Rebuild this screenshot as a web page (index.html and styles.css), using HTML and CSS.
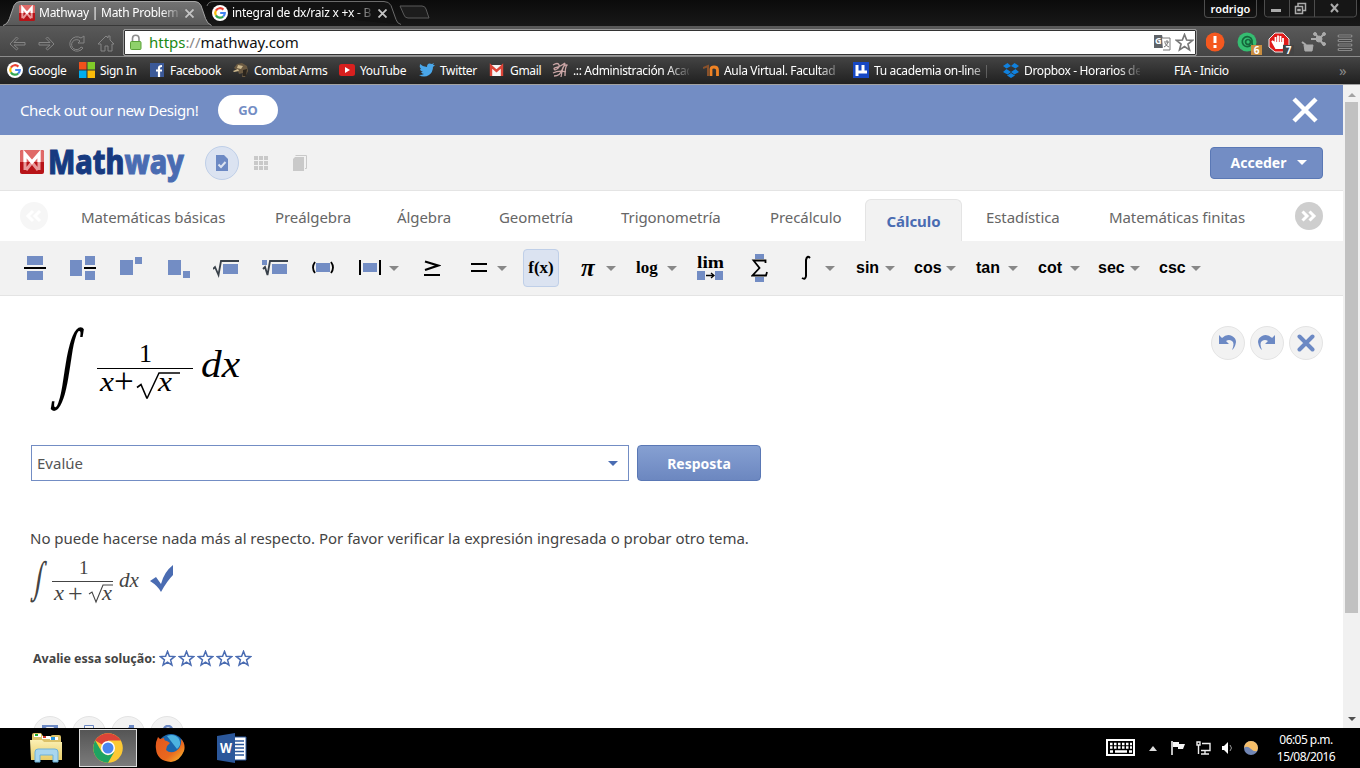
FILE: index.html
```html
<!DOCTYPE html>
<html lang="es">
<head>
  <meta charset="UTF-8">
  <title>Mathway | Math Problem Solver</title>
  <link rel="stylesheet" href="styles.css">
</head>
<body>
  <svg class="defs" width="0" height="0">
    <defs>
      <linearGradient id="tabOn" x1="0" y1="0" x2="0" y2="1"><stop offset="0" stop-color="#737373"/><stop offset="1" stop-color="#585858"/></linearGradient>
      <linearGradient id="folder" x1="0" y1="0" x2="0" y2="1"><stop offset="0" stop-color="#fbf0b4"/><stop offset="1" stop-color="#e8cd68"/></linearGradient>
      <linearGradient id="fire" x1="0" y1="0" x2="1" y2="1"><stop offset="0" stop-color="#e2561d"/><stop offset=".6" stop-color="#e9681e"/><stop offset="1" stop-color="#fbc530"/></linearGradient>
      <symbol id="google" viewBox="0 0 16 16">
        <circle cx="8" cy="8" r="8" fill="#fff"/>
        <path d="M11.4 4.6A4.8 4.8 0 0 0 3.9 5.6" fill="none" stroke="#ea4335" stroke-width="2.2"/>
        <path d="M3.9 5.6a4.8 4.8 0 0 0 0 4.8" fill="none" stroke="#fbbc05" stroke-width="2.2"/>
        <path d="M3.9 10.4a4.8 4.8 0 0 0 7.3 1.1" fill="none" stroke="#34a853" stroke-width="2.2"/>
        <path d="M11.2 11.5A4.8 4.8 0 0 0 12.8 8H8.2" fill="none" stroke="#4285f4" stroke-width="2.2"/>
      </symbol>
      <symbol id="mlogo" viewBox="0 0 24 24">
        <rect width="24" height="24" rx="2" fill="#b81418"/>
        <path d="M2 0h20a2 2 0 0 1 2 2v10H0V2a2 2 0 0 1 2-2z" fill="#e06a68"/>
        <path d="M5 20V4l7 8.500L19 4v16M6 20l6-7.500 6 7.500" fill="none" stroke="#e89a9a" stroke-width="3"/>
        <path d="M5 12V4l7 8 7-8v8" fill="none" stroke="#fff" stroke-width="3.200"/>
      </symbol>
      <symbol id="star" viewBox="0 0 16 16">
        <path d="M8 1.300l1.800 4.600 4.900.300-3.800 3.100 1.300 4.900L8 11.400l-4.200 2.800 1.300-4.900L1.300 6.200l4.900-.300z" fill="none" stroke="currentColor" stroke-width="1.400"/>
      </symbol>
    </defs>
  </svg>

  <header class="browser">
    <div class="tabstrip">
      <div class="tab tab-on">
        <svg class="tab-shape" width="212" height="26"><path d="M3 25.500c3-1 5-3 6.500-7L14 5.500Q16 1.500 20 1.500h175q4 0 6 4l4.500 13q1.500 5 6 7" fill="url(#tabOn)" stroke="#a5a5a5"/></svg>
        <svg width="16" height="16"><use href="#mlogo"/></svg>
        <span class="tab-title">Mathway | Math Problem S</span>
        <svg class="tab-close" width="9" height="9"><path d="M.5.5l8 8m0-8l-8 8" stroke="#c4c4c4" stroke-width="1.800"/></svg>
      </div>
      <div class="tab">
        <svg class="tab-shape" width="196" height="25"><path d="M1 6Q2 1.500 8 1.500h170q5 0 7 4l5 14q1 4 5 5" fill="#121212" stroke="#6b6b6b"/></svg>
        <svg width="16" height="16"><use href="#google"/></svg>
        <span class="tab-title">integral de dx/raiz x +x - B</span>
        <svg class="tab-close" width="9" height="9"><path d="M.5.5l8 8m0-8l-8 8" stroke="#c4c4c4" stroke-width="1.800"/></svg>
      </div>
      <svg class="new-tab" width="32" height="16"><path d="M1 1h22q3 0 4 3l3 9H9q-3 0-4-3z" fill="#1d1d1d" stroke="#5a5a5a"/></svg>
      <div class="user">rodrigo</div>
      <svg class="win" width="93" height="18">
        <path d="M.5 0v14q0 3 3 3h86q3 0 3-3V0M25.500 0v17M50.500 0v17" fill="#161616" stroke="#4d4d4d"/>
        <path d="M7 10.500h10" stroke="#aaa" stroke-width="3"/>
        <path d="M31.500 6.500h7v7h-7zM34 6V3.500h7.500v7H39M34 9.500h2v1h-2z" fill="none" stroke="#aaa" stroke-width="1.500"/>
        <path d="M67 4l7 8m0-8l-7 8" stroke="#aaa" stroke-width="2"/>
      </svg>
    </div>

    <div class="toolbar">
      <svg class="nav-icons" width="112" height="20" fill="none" stroke="#858585" stroke-width="1">
        <path d="M22 9.500H11l4-4-1.500-1.500L7 11l6.500 6 1.500-1.500-4-3.500h11zM36 9.500h11l-4-4L44.500 4 51 11l-6.500 6-1.500-1.500 4-3.500H36z"/>
        <path d="M81 6V3l-3 2a7.200 7.200 0 1 0 2 10l-2-1a5 5 0 1 1-1-6l-2 2h6z"/>
        <path d="M95 11l8-8 2 2V3h2v4l4 4h-2v7h-4v-5h-3v5h-4v-7z"/>
      </svg>
      <div class="omnibox">
        <svg width="14" height="18"><path d="M3.500 8V4.500a3.200 3.200 0 0 1 6.500 0V8" fill="none" stroke="#8d8d8d" stroke-width="1.600"/><rect x="1.500" y="7.500" width="10.500" height="8" rx="1" fill="#8fd16b" stroke="#5ba139"/></svg>
        <span class="url"><b>https</b><i>://</i>mathway.com</span>
        <svg class="translate" width="17" height="16"><path d="M0 0h8l3 13H0z" fill="#5f6368"/><path d="M8 3h8v12H9" fill="#fff" stroke="#777"/><path d="M10 7h5M13 5v2M14 7q-1 4-4 5M11 8q1 3 4 4" stroke="#777" fill="none"/><text x="1" y="9" fill="#fff" class="tr-g">G</text></svg>
        <svg class="fav" width="19" height="19"><use href="#star"/></svg>
      </div>
      <svg class="ext" width="150" height="26">
        <circle cx="9" cy="11" r="9.500" fill="#f4581f"/><path d="M9 5v7M9 14v3" stroke="#fff" stroke-width="3"/>
        <circle cx="41" cy="11" r="9.500" fill="#35bd71"/><path d="M46 9v3q0 3 2 3M46 9a5 5 0 1 0-1 5M42 8.500a2.500 2.500 0 1 0 .1 0" fill="none" stroke="#15663c" stroke-width="1.700"/>
        <rect x="45" y="14" width="11" height="10" fill="#c98d3f"/><text x="50.500" y="23" class="badge">6</text>
        <path d="M69 2h8l6 6v8l-6 5h-8l-6-5V8z" fill="#e01a1a" stroke="#eee"/><path d="M69.500 13V6M72 12V4.500M74.500 12V5M77 13V7M69 12l-3-2 4 7h6l1-5z" fill="#fff" stroke="#fff" stroke-width="1.800"/>
        <rect x="77" y="14" width="11" height="10" fill="#444"/><text x="82.500" y="23" class="badge">7</text>
        <g stroke="#aaa" fill="#aaa"><path d="M98 14h9l-1 6h-7z" /><path d="M96 11l4 3M109 2l4 6 5-5M113 8l5 6M105 8l8 0" fill="none" stroke-width="2"/><circle cx="113" cy="8" r="3"/><circle cx="109" cy="3" r="1.500"/><circle cx="118" cy="3" r="1.500"/><circle cx="118" cy="13" r="1.500"/></g>
        <path d="M133 5h12M133 9.500h12M133 14h12M133 18.500h12" stroke="#888" stroke-width="3" stroke-linecap="round"/><path d="M133 5h12M133 9.500h12M133 14h12M133 18.500h12" stroke="#444" stroke-width="1.200"/>
      </svg>
    </div>

    <nav class="bookmarks">
      <a><svg width="16" height="16"><use href="#google"/></svg>Google</a>
      <a><svg width="16" height="16"><path d="M0 0h7.500v7.500H0z" fill="#f1511b"/><path d="M8.500 0H16v7.500H8.500z" fill="#80cc28"/><path d="M0 8.500h7.500V16H0z" fill="#00adef"/><path d="M8.500 8.500H16V16H8.500z" fill="#fbbc09"/></svg>Sign In</a>
      <a><svg width="16" height="16"><rect x="1" y="1" width="14" height="14" fill="#3b5998"/><path d="M10 15V6q0-2 3-2M7 8.500h6" fill="none" stroke="#fff" stroke-width="2.200"/></svg>Facebook</a>
      <a><svg width="16" height="16"><path d="M1 6l3-4 5-1 5 3 1 5-3 6H9l1-4-4 1-1-3z" fill="#6b5a42"/><path d="M5 3l5 1-2 3-4-1zM0 9l5-2 1 2-5 1z" fill="#cdb88d"/><path d="M10 8l4-1-1 7h-3z" fill="#2c251c"/></svg>Combat Arms</a>
      <a><svg width="16" height="16"><rect y="2" width="16" height="12" rx="2.500" fill="#d8201f"/><path d="M6 5l5 3-5 3z" fill="#fff"/></svg>YouTube</a>
      <a><svg width="16" height="16"><path d="M0 13q5 3 10 0 4-3 4-8l2-2h-2l1-2-2 1Q8 0 8 5 4 5 1 2q-1 3 1 5H1q0 2 3 3H2q1 2 3 2-2 1-5 1z" fill="#4aa7ea"/></svg>Twitter</a>
      <a><svg width="16" height="16"><path d="M1 3h13v11H1z" fill="#f5f5f5"/><path d="M2 14V4l5.500 5L13 4v10" fill="none" stroke="#dc4437" stroke-width="2.400"/></svg>Gmail</a>
      <a class="fade"><svg width="16" height="16" fill="none" stroke="#cba6a6" stroke-width="1.300"><path d="M1 3q5-3 6 0t-4 5q-3-2 3-3 3-1 7-4-3 6-4 14M2 14q6 0 8-6t5-5q-2 2-2 11M1 11q6-3 13-1"/></svg>.:: Administración Acad</a>
      <a class="fade"><svg width="16" height="16"><path d="M0 6l5-2v10" fill="none" stroke="#89512b" stroke-width="2"/><path d="M8 14V7q0-2 3-2 3.500 0 3.500 3v6" fill="none" stroke="#f08324" stroke-width="2.800"/></svg>Aula Virtual. Facultad</a>
      <a class="fade"><svg width="16" height="16"><rect width="16" height="16" fill="#1748c4"/><path d="M4 14V3M4 10h6V3v7h4" fill="none" stroke="#fff" stroke-width="3"/></svg>Tu academia on-line |</a>
      <a class="fade"><svg width="16" height="16" fill="#1081de"><path d="M4.500 1L8 4 3.500 6.500 0 4zM11.500 1L8 4l4.500 2.500L16 4zM3.500 7L8 10l-3.500 2.500L0 10zM12.500 7L8 10l3.500 2.500L16 10zM8 11l4 2.500L8 16l-4-2.500z"/></svg>Dropbox - Horarios de</a>
      <a>FIA - Inicio</a>
      <span class="more">»</span>
    </nav>
  </header>

  <div class="viewport">
    <main class="page">
      <div class="banner">
        <span class="banner-text">Check out our new Design!</span>
        <button class="go">GO</button>
        <svg class="banner-close" width="26" height="26"><path d="M2 2l22 22M24 2L2 24" stroke="#fff" stroke-width="4.500"/></svg>
      </div>

      <div class="head">
        <svg class="logo" width="166" height="38">
          <use href="#mlogo" width="24" height="24" y="4"/>
          <text x="28" y="28" textLength="136" lengthAdjust="spacingAndGlyphs" fill="#173a80" stroke="#173a80">Math<tspan fill="#4a6cb2" stroke="#4a6cb2">way</tspan></text>
        </svg>
        <div class="mode mode-on"><svg width="12" height="16"><path d="M0 0h8l4 4v12H0z" fill="#6c89c4"/><path d="M2.500 9.500L5 12l4.500-5" fill="none" stroke="#dbe3f1" stroke-width="2"/></svg></div>
        <div class="mode"><svg width="14" height="14" fill="#c9c9c9"><path d="M0 0h4v4H0zM5 0h4v4H5zM10 0h4v4h-4zM0 5h4v4H0zM5 5h4v4H5zM10 5h4v4h-4zM0 10h4v4H0zM5 10h4v4H5zM10 10h4v4h-4z"/></svg></div>
        <div class="mode"><svg width="14" height="16"><path d="M2.500.5h11v13H12" fill="none" stroke="#c9c9c9"/><path d="M2 2h9v14H0V4z" fill="#c9c9c9"/></svg></div>
        <button class="login">Acceder <i class="caret"></i></button>
      </div>

      <nav class="subjects">
        <svg class="arrow" width="28" height="28"><circle cx="14" cy="14" r="14" fill="#f6f6f6"/><path d="M13 9l-5 5 5 5M20 9l-5 5 5 5" fill="none" stroke="#fff" stroke-width="3"/></svg>
        <a>Matemáticas básicas</a>
        <a>Preálgebra</a>
        <a>Álgebra</a>
        <a>Geometría</a>
        <a>Trigonometría</a>
        <a>Precálculo</a>
        <a class="current">Cálculo</a>
        <a>Estadística</a>
        <a>Matemáticas finitas</a>
        <svg class="arrow" width="28" height="28"><circle cx="14" cy="14" r="14" fill="#cecece"/><path d="M7.500 9.500l4.500 4.500-4.500 4.500M14.500 9.500l4.500 4.500-4.500 4.500" fill="none" stroke="#fff" stroke-width="3"/></svg>
      </nav>

      <div class="tools">
        <div class="tool"><svg width="22" height="24"><path d="M3 0h16v9H3zM3 15h16v9H3z" fill="#738dc4"/><path d="M0 12h22" stroke="#000" stroke-width="2"/></svg></div>
        <div class="tool"><svg width="26" height="24"><path d="M0 4h12v16H0zM15 0h10v9H15zM15 15h10v9H15z" fill="#738dc4"/><path d="M14 12h12" stroke="#000" stroke-width="2"/></svg></div>
        <div class="tool"><svg width="22" height="24" fill="#738dc4"><path d="M0 4h13v15H0zM15 1h7v7h-7z"/></svg></div>
        <div class="tool"><svg width="22" height="24" fill="#738dc4"><path d="M0 4h13v15H0zM15 15h7v7h-7z"/></svg></div>
        <div class="tool"><svg width="26" height="24"><path d="M10 8h15v10H10z" fill="#738dc4"/><path d="M0 13l2-2 3.500 8L8 5h18" fill="none" stroke="#39414a" stroke-width="1.800"/></svg></div>
        <div class="tool"><svg width="26" height="24"><path d="M10 8h15v10H10zM0 4h5v5H0z" fill="#738dc4"/><path d="M1 13l2-2 2.500 8L8 5h18" fill="none" stroke="#39414a" stroke-width="1.800"/></svg></div>
        <div class="tool"><svg width="22" height="24"><path d="M4 7h14v9H4z" fill="#738dc4"/><path d="M3 6q-4 5.500 0 11M19 6q4 5.500 0 11" fill="none" stroke="#000" stroke-width="1.800"/></svg></div>
        <div class="tool"><svg width="30" height="24"><path d="M4 7h14v9H4z" fill="#738dc4"/><path d="M1 4v15M21 4v15" stroke="#000" stroke-width="2"/></svg><i class="caret"></i></div>
        <div class="tool"><svg width="17" height="24"><path d="M1 5.500l13 4L1 14M0 19h16" fill="none" stroke="#000" stroke-width="2.200"/></svg></div>
        <div class="tool"><svg width="26" height="24"><path d="M0 8h16M0 15h16" stroke="#000" stroke-width="2"/></svg><i class="caret"></i></div>
        <div class="tool tool-on"><span class="serif fx">f(x)</span></div>
        <div class="tool"><span class="serif pi">π</span><i class="caret"></i></div>
        <div class="tool"><span class="serif log">log</span><i class="caret"></i></div>
        <div class="tool"><svg width="28" height="28" class="serif"><text x="0" y="14" textLength="27" lengthAdjust="spacingAndGlyphs">lim</text><path d="M0 17h8v9H0zM18 17h8v9h-8z" fill="#738dc4"/><path d="M9 21.500h8M14 19l3 2.500-3 2.500" fill="none" stroke="#000" stroke-width="1.300"/></svg></div>
        <div class="tool"><svg width="17" height="28"><path d="M4 0h9v5H4zM4 23h9v5H4z" fill="#738dc4"/><path d="M14.500 9V6.500H2.500l6 7.500-7 7.500H15l1-3.500" fill="none" stroke="#000" stroke-width="1.800"/></svg></div>
        <div class="tool"><svg width="25" height="26"><path d="M10 3q-3-3-4 2v16q-.5 4-4 2" fill="none" stroke="#000" stroke-width="2"/></svg><i class="caret"></i></div>
        <div class="tool"><span class="trig sin">sin</span><i class="caret"></i></div>
        <div class="tool"><span class="trig">cos</span><i class="caret"></i></div>
        <div class="tool"><span class="trig">tan</span><i class="caret"></i></div>
        <div class="tool"><span class="trig">cot</span><i class="caret"></i></div>
        <div class="tool"><span class="trig">sec</span><i class="caret"></i></div>
        <div class="tool"><span class="trig">csc</span><i class="caret"></i></div>
      </div>

      <section class="editor">
        <svg class="math" width="200" height="92">
          <text class="int" transform="translate(0 68) skewX(-9) scale(.62 1)" font-size="76">∫</text>
          <text x="89" y="40" font-size="26">1</text>
          <path d="M47 46.500h96" stroke="#000"/>
          <path d="M87 65.500l4-3 6 14" fill="none" stroke="#000" stroke-width="1.600"/>
          <path d="M97 76.500l12-25.500h21" fill="none" stroke="#000" stroke-width="1.500"/>
          <text x="50" y="69" font-size="28" class="it" textLength="14" lengthAdjust="spacingAndGlyphs">x</text>
          <text x="64" y="71" font-size="35">+</text>
          <text x="108" y="69" font-size="28" class="it" textLength="14" lengthAdjust="spacingAndGlyphs">x</text>
          <text x="151" y="55" font-size="38" class="it" textLength="39" lengthAdjust="spacingAndGlyphs">dx</text>
        </svg>
        <div class="history">
          <div class="round"><svg width="18" height="18"><path d="M0 1l3 3Q8-1 13 2q4 2 4 6-1 6-4 8 3-7 0-9-3-2-6 0l3 3H0z" fill="#6c89c4"/></svg></div>
          <div class="round"><svg width="18" height="18"><path d="M17 1l-3 3Q9-1 4 2 0 4 0 8q1 6 4 8Q1 9 4 7q3-2 6 0l-3 3h10z" fill="#6c89c4"/></svg></div>
          <div class="round"><svg width="18" height="18"><path d="M2.500 2.500l13 13m0-13l-13 13" stroke="#6c89c4" stroke-width="4" stroke-linecap="round"/></svg></div>
        </div>
      </section>

      <form class="answer">
        <div class="select">Evalúe <i class="caret"></i></div>
        <button type="button" class="submit">Resposta</button>
      </form>

      <section class="result">
        <p>No puede hacerse nada más al respecto. Por favor verificar la expresión ingresada o probar otro tema.</p>
        <svg class="math small" width="150" height="50">
          <text class="int" transform="translate(0 36) skewX(-9) scale(.62 1)" font-size="38">∫</text>
          <text x="49" y="18" font-size="19">1</text>
          <path d="M22 25.500h61" stroke="#444"/>
          <path d="M59 38l3-2 4 10 7-17h10" fill="none" stroke="#444" stroke-width="1.100"/>
          <text x="24" y="44" font-size="20" class="it" textLength="10" lengthAdjust="spacingAndGlyphs">x</text>
          <text x="38" y="46" font-size="26">+</text>
          <text x="72" y="44" font-size="20" class="it" textLength="10" lengthAdjust="spacingAndGlyphs">x</text>
          <text x="89" y="31" font-size="20" class="it" textLength="20" lengthAdjust="spacingAndGlyphs">dx</text>
          <path d="M120 25l6-4 5 7q3-12 12-19v10q-6 6-12 17-3-6-11-11z" fill="#4a6cb2"/>
        </svg>
      </section>

      <div class="rate">
        <strong>Avalie essa solução:</strong>
        <svg width="17" height="17"><use href="#star"/></svg>
        <svg width="17" height="17"><use href="#star"/></svg>
        <svg width="17" height="17"><use href="#star"/></svg>
        <svg width="17" height="17"><use href="#star"/></svg>
        <svg width="17" height="17"><use href="#star"/></svg>
      </div>

      <div class="share">
        <div class="round"><svg width="16" height="16" fill="none" stroke="#6c89c4" stroke-width="2"><path d="M1 1h14v10H1zM2 2l6 5 6-5"/></svg></div>
        <div class="round"><svg width="16" height="16" fill="none" stroke="#6c89c4"><path d="M3.500 6V.5h9V6M1 6h14v7H1z"/></svg></div>
        <div class="round"><svg width="16" height="16"><path d="M9 0h5v16H9zM2 8l7-6v6z" fill="#6c89c4"/></svg></div>
        <div class="round"><svg width="16" height="16"><circle cx="9" cy="5" r="4" fill="none" stroke="#6c89c4" stroke-width="2.500"/></svg></div>
      </div>
    </main>

    <aside class="scrollbar">
      <i class="up"></i>
      <div class="thumb"></div>
      <i class="down"></i>
    </aside>
  </div>

  <footer class="taskbar">
    <svg class="app" width="34" height="32">
      <path d="M2 3q0-2 2-2h7l2 3h8q0-1 2-1h6q2 0 2 2v22H2z" fill="#dcc269"/>
      <path d="M4 2h7v3H4zM12 4h8v3h-8zM20 5h8v3h-8z" fill="#fff"/><path d="M5 2h3v2H5z" fill="#1cae32"/><path d="M13 4h3v2h-3z" fill="#d0372c"/><path d="M21 5h4v3h-4z" fill="#2896df"/>
      <path d="M0 8h12l2 2h18v18H1z" fill="url(#folder)"/>
      <path d="M5 20q0-3 3-3h17q3 0 3 3v10h-5v-7H10v7H5z" fill="#a8d6ee" stroke="#6eb1d8"/>
    </svg>
    <div class="task-on">
      <svg width="30" height="30" viewBox="-15 -15 30 30"><circle r="14.800" fill="#fcc934"/><path d="M0 0L-12.800-7.400A14.800 14.800 0 0 1 12.800-7.400H0z" fill="#dc4437"/><path d="M-12.800-7.400L-6.500 3.500 0 7.500 6.500 3.500 0 14.800A14.800 14.800 0 0 1-12.800-7.400z" fill="#1ea362"/><circle r="7" fill="#fff"/><circle r="5.500" fill="#4a86ee"/></svg>
    </div>
    <svg class="firefox" width="30" height="30"><circle cx="16" cy="14" r="13" fill="#1b66ad"/><path d="M12 3q8-3 12 3 3 6-2 10" fill="#4db3e0"/><path d="M3 4l2 2 4-1q0 3 3 3l3 2-3 3-1 4q4 4 10 1 6-4 5-12 5 5 3 12-4 10-13 11Q2 28 1 16 0 10 3 4z" fill="url(#fire)"/></svg>
    <svg class="word" width="30" height="30"><path d="M16 4h13v23H16z" fill="#fff" stroke="#2b579a"/><path d="M18 8h9M18 11.500h9M18 15h9M18 18.500h9M18 22h9" stroke="#2b579a" stroke-width="1.300"/><path d="M0 3l18-3v30L0 27z" fill="#2b579a"/><text x="9" y="20" class="w" textLength="12" lengthAdjust="spacingAndGlyphs">W</text></svg>
    <div class="tray">
      <svg width="30" height="18"><path d="M1 1h27v15H1z" fill="none" stroke="#fff" stroke-width="2"/><path d="M4 5h22M4 8.500h22" stroke="#fff" stroke-width="2.500" stroke-dasharray="2.500 1.500"/><path d="M4 12.500h3M9 12.500h12M23 12.500h3" stroke="#fff" stroke-width="2.500"/></svg>
      <svg class="t-up" width="8" height="5"><path d="M4 0l4 5H0z" fill="#ddd"/></svg>
      <svg class="t-flag" width="16" height="14"><path d="M1 0v14" stroke="#fff" stroke-width="1.500"/><path d="M2 1h6v2h6l-2 5H7V6H2z" fill="#f5f5f5"/></svg>
      <svg class="t-net" width="16" height="14" fill="none" stroke="#eee" stroke-width="1.400"><path d="M6 2.500h8v7H5M9 10v3M5 13h8M1 1h3v3H1zM2.500 4v9"/></svg>
      <svg class="t-vol" width="13" height="14"><path d="M0 5h2l4-4v12L2 9H0z" fill="#fff"/><path d="M8 4q3 3 0 6" fill="none" stroke="#999"/></svg>
      <svg class="t-f" width="14" height="14"><circle cx="7" cy="7" r="7" fill="#7186b4"/><path d="M0 7a7 7 0 0 1 14 0l-1 3q-3 1-6-2-4-4-7-1z" fill="#f6be69"/></svg>
      <div class="clock">06:05 p.m.<br>15/08/2016</div>
    </div>
  </footer>
</body>
</html>
```
FILE: styles.css
```css
* {
  box-sizing: border-box;
}
body {
  margin: 0;
  width: 1360px;
  height: 768px;
  overflow: hidden;
  background: #fff;
  font-family: "Noto Sans", "Open Sans", sans-serif;
  display: flex;
  flex-direction: column;
}
svg {
  display: block;
  flex: none;
}
.defs {
  position: absolute;
}
button {
  font-family: inherit;
  border: none;
  padding: 0;
}
.caret {
  border: 5px solid transparent;
  border-top-color: #888;
  border-bottom: 0;
  flex: none;
}

/* browser window */
.browser {
  height: 85px;
  background: linear-gradient(#5a5a5a 25px, #454545 56px, #202020 84px);
  border-bottom: 1px solid #a2a2a2;
  color: #fff;
  font-size: 12px;
}
.tabstrip {
  height: 26px;
  display: flex;
  background: linear-gradient(#0b0b0b, #181818);
}
.tab {
  position: relative;
  display: flex;
  align-items: center;
  width: 190px;
  height: 26px;
  padding-left: 6px;
}
.tab > * {
  position: relative;
}
.tab > .tab-shape {
  position: absolute;
  left: 0;
  top: 0;
}
.tab-on {
  width: 206px;
  padding-left: 19px;
  z-index: 1;
}
.tab-title {
  width: 144px;
  margin: -1px 0 0 4px;
  white-space: nowrap;
  letter-spacing: -0.25px;
  -webkit-mask-image: linear-gradient(to right, #000 122px, transparent 144px);
}
.tab-close {
  margin-left: 2px;
}
.new-tab {
  margin: 5px 0 0 3px;
}
.user {
  width: 53px;
  height: 18px;
  margin-left: auto;
  border: 1px solid #4d4d4d;
  border-top: 0;
  border-radius: 0 0 4px 4px;
  text-align: center;
  font-size: 11px;
  font-weight: 600;
  line-height: 17px;
}
.win {
  margin: 0 3px 0 7px;
}
.toolbar {
  height: 31px;
  display: flex;
  align-items: center;
  border-bottom: 1px solid #8b8b8b;
}
.nav-icons {
  margin: 3px 0 0 3px;
}
.omnibox {
  width: 1074px;
  height: 27px;
  margin: 3px 0 0 8px;
  padding-left: 5px;
  display: flex;
  align-items: center;
  background: #fff;
  border: 1px solid #999;
  box-shadow: inset 0 0 0 1px #333;
  border-radius: 2px;
  color: #111;
}
.url {
  flex: 1;
  margin: -2px 0 0 6px;
  font-size: 15px;
  letter-spacing: -0.03px;
}
.url b {
  font-weight: 400;
  color: #1b8a14;
}
.url i {
  font-style: normal;
  color: #888;
}
.tr-g {
  font-size: 9px;
  font-weight: 700;
}
.fav {
  margin: 0 2px 0 4px;
  color: #777;
}
.ext {
  margin: 5px 0 0 9px;
}
.badge {
  fill: #fff;
  font-size: 10px;
  font-weight: 700;
  text-anchor: middle;
}
.bookmarks {
  height: 26px;
  padding-left: 7px;
  display: grid;
  grid-template-columns: 72px 70px 84px 106px 80px 70px 63px 151px 150px 150px 171px 165px 20px;
  align-items: center;
  letter-spacing: -0.35px;
}
.bookmarks a {
  display: flex;
  align-items: center;
  gap: 5px;
  white-space: nowrap;
}
.bookmarks .fade {
  width: 137px;
  -webkit-mask-image: linear-gradient(to right, #000 115px, transparent 140px);
}
.more {
  color: #888;
  font-size: 15px;
  line-height: 20px;
}

/* page */
.viewport {
  height: 643px;
  display: flex;
}
.page {
  width: 1343px;
  height: 643px;
  overflow: hidden;
}
.banner {
  height: 50px;
  padding: 0 25px 0 20px;
  display: flex;
  align-items: center;
  background: #738dc4;
  color: #fff;
}
.banner-text {
  width: 198px;
  font-size: 15px;
  letter-spacing: -0.41px;
  white-space: nowrap;
}
.go {
  width: 60px;
  height: 30px;
  border-radius: 15px;
  background: #fff;
  color: #738dc4;
  font-size: 13px;
  font-weight: 700;
}
.banner-close {
  margin-left: auto;
}
.head {
  height: 56px;
  padding: 0 20px;
  display: flex;
  align-items: center;
  background: #f2f2f2;
  border-bottom: 1px solid #e4e4e4;
}
.logo {
  margin: 5px 19px 0 0;
  font-size: 33px;
  font-weight: 800;
}
.mode {
  width: 34px;
  height: 34px;
  margin-right: 5px;
  border-radius: 50%;
  display: flex;
  align-items: center;
  justify-content: center;
}
.mode-on {
  background: #dbe3f1;
  border: 1px solid #bfcfe8;
}
.login {
  width: 113px;
  height: 32px;
  margin-left: auto;
  padding-left: 5px;
  display: flex;
  align-items: center;
  justify-content: center;
  gap: 11px;
  border: 1px solid #5a78b5;
  border-radius: 4px;
  background: #738dc4;
  color: #fff;
  font-size: 14px;
  font-weight: 700;
}
.login .caret {
  border-top-color: #fff;
}
.subjects {
  height: 50px;
  padding-left: 20px;
  display: grid;
  grid-template-columns: 61px 194px 122px 102px 122px 149px 95px 121px 123px 186px 28px;
  align-items: center;
  color: #666;
  font-size: 15px;
  letter-spacing: -0.08px;
  white-space: nowrap;
}
.subjects a {
  padding-top: 1px;
}
.subjects .current {
  align-self: end;
  width: 97px;
  height: 42px;
  padding: 0;
  border: 1px solid #e4e4e4;
  border-bottom: 0;
  border-radius: 6px 6px 0 0;
  background: #f2f2f2;
  color: #4a6cb2;
  font-weight: 700;
  line-height: 43px;
  text-align: center;
}
.tools {
  height: 55px;
  padding-left: 24px;
  display: grid;
  grid-template-columns: 46px 50px 48px 45px 49px 50px 47px 65px 47px 52px 58px 55px 61px 54px 49px 56px 58px 62px 62px 60px 61px 60px;
  align-items: center;
  background: #f2f2f2;
  border-bottom: 1px solid #e4e4e4;
}
.tool {
  display: flex;
  align-items: center;
}
.tool-on {
  width: 36px;
  height: 38px;
  justify-content: center;
  background: #dbe3f1;
  border: 1px solid #bfcfe8;
  border-radius: 4px;
}
.serif {
  font-family: "Liberation Serif", serif;
  font-size: 17px;
  font-weight: 700;
}
.fx {
  font-size: 17px;
}
.pi {
  width: 25px;
  font-size: 25px;
  font-style: italic;
  line-height: 20px;
}
.log {
  width: 31px;
}
.trig {
  width: 32px;
  font-family: "Liberation Sans", sans-serif;
  font-size: 16px;
  font-weight: 700;
}
.sin {
  width: 29px;
}
.editor {
  height: 149px;
  padding: 26px 20px 0 50px;
  display: flex;
  justify-content: space-between;
}
.math {
  font-family: "Liberation Serif", serif;
}
.int {
  font-family: "DejaVu Math TeX Gyre", "Liberation Serif", serif;
}
.it {
  font-style: italic;
}
.history {
  display: flex;
  gap: 5px;
  margin-top: 4px;
}
.round {
  width: 34px;
  height: 34px;
  border: 1px solid #e4e4e4;
  border-radius: 50%;
  background: #f2f2f2;
  display: flex;
  align-items: center;
  justify-content: center;
}
.answer {
  padding-left: 31px;
  display: flex;
  gap: 8px;
}
.select {
  width: 598px;
  height: 36px;
  padding: 0 10px 0 5px;
  display: flex;
  align-items: center;
  justify-content: space-between;
  border: 1px solid #738dc4;
  color: #555;
  font-size: 15px;
}
.select .caret {
  border-top-color: #4a6cb2;
}
.submit {
  width: 124px;
  height: 36px;
  border: 1px solid #5a78b5;
  border-radius: 4px;
  background: linear-gradient(#86a0d2, #6c87c0);
  color: #fff;
  font-size: 14px;
  font-weight: 700;
}
.result {
  height: 130px;
  padding: 45px 0 0 30px;
  color: #444;
}
.result p {
  margin: 0 0 6px;
  font-size: 15px;
  line-height: 24px;
  letter-spacing: -0.02px;
}
.small {
  fill: #444;
}
.rate {
  height: 24px;
  margin: 35px 0 0 33px;
  display: flex;
  align-items: center;
  gap: 2px;
  color: #4a6cb2;
}
.rate strong {
  width: 124px;
  color: #444;
  font-size: 12.5px;
  letter-spacing: -0.05px;
  white-space: nowrap;
}
.share {
  margin: 46px 0 0 33px;
  display: flex;
  gap: 5px;
}
.scrollbar {
  width: 17px;
  display: flex;
  flex-direction: column;
  align-items: center;
  background: #f1f1f1;
}
.scrollbar i {
  border: 4px solid transparent;
}
.scrollbar .up {
  margin-top: 8px;
  border-top: 0;
  border-bottom-color: #a3a3a3;
}
.scrollbar .down {
  margin: auto 0 7px;
  border-bottom: 0;
  border-top-color: #505050;
}
.thumb {
  width: 13px;
  height: 511px;
  margin-top: 5px;
  background: #c1c1c1;
}

/* taskbar */
.taskbar {
  height: 40px;
  padding-left: 30px;
  display: flex;
  align-items: center;
  background: #000;
  color: #fff;
}
.task-on {
  width: 58px;
  height: 38px;
  margin: 0 18px 0 15px;
  display: flex;
  align-items: center;
  justify-content: center;
  background: linear-gradient(#555, #7b7b7b);
  border: 1px solid #ddd;
}
.word {
  margin-left: 32px;
}
.w {
  fill: #fff;
  font-size: 14px;
  font-weight: 700;
  text-anchor: middle;
}
.tray {
  margin-left: auto;
  padding-right: 23px;
  display: flex;
  align-items: center;
}
.t-up {
  margin-left: 13px;
}
.t-flag {
  margin-left: 14px;
}
.t-net {
  margin-left: 9px;
}
.t-vol {
  margin-left: 10px;
}
.t-f {
  margin-left: 9px;
}
.clock {
  width: 62px;
  margin-left: 17px;
  font-size: 12px;
  letter-spacing: -0.55px;
  line-height: 17px;
  text-align: center;
}
```
